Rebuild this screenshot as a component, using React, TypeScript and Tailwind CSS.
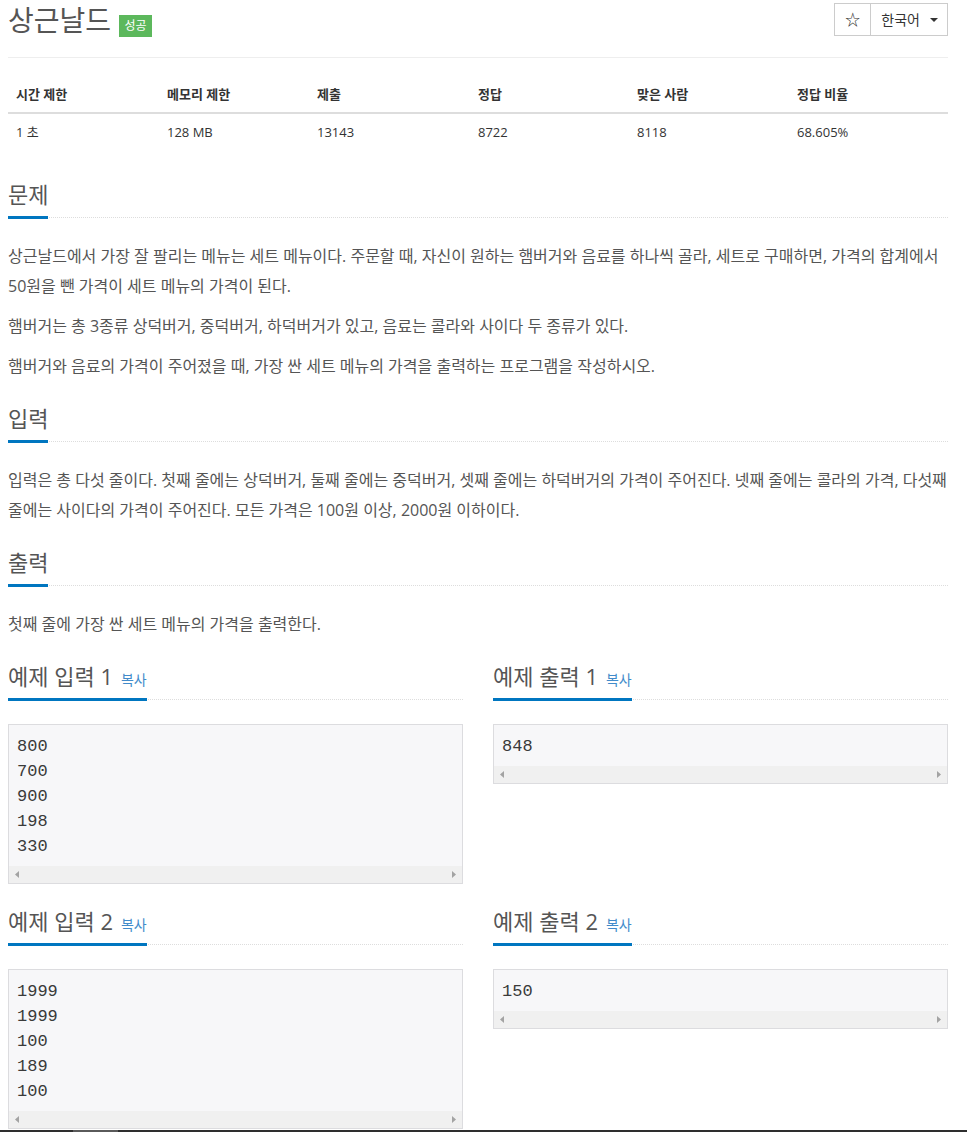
import React from 'react';

const FONT = { fontFamily: '"Open Sans", "Noto Sans CJK KR", sans-serif' };

interface HeadlineProps {
  title: string;
  copy?: boolean;
}

const Headline: React.FC<HeadlineProps> = ({ title, copy }) => (
  <div className={`${copy ? 'mb-[24px]' : 'mb-[23px]'} flex border-b border-dotted border-[#dddddd]`}>
    <h2 className="-mb-[2px] border-b-[3px] border-[#0076c0] pb-[8px] text-[22px] font-normal leading-[28px] text-[#555555]">
      {title}
      {copy && <span className="ml-[8px] text-[14px] leading-none text-[#428bca]">복사</span>}
    </h2>
  </div>
);

const ScrollBar = () => (
  <div className="flex h-[17px] items-center justify-between bg-[#f0f0f0] px-[6px]">
    <svg width="4" height="7" viewBox="0 0 4 7">
      <path d="M4 0 L0 3.5 L4 7 Z" fill="#a3a3a3" />
    </svg>
    <svg width="4" height="7" viewBox="0 0 4 7">
      <path d="M0 0 L4 3.5 L0 7 Z" fill="#a3a3a3" />
    </svg>
  </div>
);

const SampleBox: React.FC<{ lines: string[] }> = ({ lines }) => (
  <div className="border border-[#dcdcdf] bg-[#f7f7f9]">
    <pre
      className="px-[8px] pt-[9px] pb-[7px] text-[17px] leading-[25px] text-[#3a3a3a]"
      style={{ fontFamily: '"Liberation Mono", monospace' }}
    >
      {lines.join('\n')}
    </pre>
    <ScrollBar />
  </div>
);

const samples = [
  { title: '예제 입력 1', lines: ['800', '700', '900', '198', '330'] },
  { title: '예제 출력 1', lines: ['848'] },
  { title: '예제 입력 2', lines: ['1999', '1999', '100', '189', '100'] },
  { title: '예제 출력 2', lines: ['150'] },
];

const stats = [
  { head: '시간 제한', value: '1 초', w: 'w-[151px]' },
  { head: '메모리 제한', value: '128 MB', w: 'w-[150px]' },
  { head: '제출', value: '13143', w: 'w-[161px]' },
  { head: '정답', value: '8722', w: 'w-[159px]' },
  { head: '맞은 사람', value: '8118', w: 'w-[160px]' },
  { head: '정답 비율', value: '68.605%', w: 'w-[159px]' },
];

export default function App() {
  return (
    <div className="min-h-screen bg-white" style={FONT}>
      <div className="ml-[8px] w-[940px] pb-[6px]">
        {/* title row */}
        <div className="flex items-start justify-between pt-[3px]">
          <div className="flex items-end">
            <h1 className="text-[28px] font-normal leading-[34px] text-[#555555]">상근날드</h1>
            <span className="ml-[8px] flex h-[22px] w-[33px] items-center justify-center bg-[#5cb85c] text-[12px] text-white">
              성공
            </span>
          </div>
          <div className="flex h-[33px] border border-[#cccccc] text-[14px] text-[#333333]">
            <div className="flex w-[36px] items-center justify-center border-r border-[#cccccc] text-[15px]">☆</div>
            <div className="flex items-center gap-[10px] pl-[10px] pr-[9px]">
              <span>한국어</span>
              <svg width="8" height="4" viewBox="0 0 8 4">
                <path d="M0 0 L8 0 L4 4 Z" fill="#333333" />
              </svg>
            </div>
          </div>
        </div>

        <div className="mt-[20px] h-px bg-[#eeeeee]" />

        {/* stats table */}
        <table className="mt-[19px] mb-[17px] w-full table-fixed text-[13px] text-[#333333]">
          <thead>
            <tr className="border-b-2 border-[#dddddd]">
              {stats.map((s) => (
                <th key={s.head} className={`${s.w} px-[8px] py-[8px] text-left font-bold leading-[19px]`}>
                  {s.head}
                </th>
              ))}
            </tr>
          </thead>
          <tbody>
            <tr>
              {stats.map((s) => (
                <td key={s.head} className="px-[8px] py-[8px] leading-[20px]">
                  {s.value}
                </td>
              ))}
            </tr>
          </tbody>
        </table>

        <section className="pt-[13px]">
          <Headline title="문제" />
          <div className="text-[16px] leading-[30px] text-[#555555]">
            <p className="mb-[10px]">
              상근날드에서 가장 잘 팔리는 메뉴는 세트 메뉴이다. 주문할 때, 자신이 원하는 햄버거와 음료를 하나씩 골라, 세트로 구매하면, 가격의 합계에서 50원을 뺀 가격이 세트 메뉴의 가격이 된다.
            </p>
            <p className="mb-[10px]">햄버거는 총 3종류 상덕버거, 중덕버거, 하덕버거가 있고, 음료는 콜라와 사이다 두 종류가 있다.</p>
            <p className="mb-[10px]">햄버거와 음료의 가격이 주어졌을 때, 가장 싼 세트 메뉴의 가격을 출력하는 프로그램을 작성하시오.</p>
          </div>
        </section>

        <section className="pt-[13px]">
          <Headline title="입력" />
          <p className="mb-[10px] text-[16px] leading-[30px] text-[#555555]">
            입력은 총 다섯 줄이다. 첫째 줄에는 상덕버거, 둘째 줄에는 중덕버거, 셋째 줄에는 하덕버거의 가격이 주어진다. 넷째 줄에는 콜라의 가격, 다섯째 줄에는 사이다의 가격이 주어진다. 모든 가격은 100원 이상, 2000원 이하이다.
          </p>
        </section>

        <section className="pt-[13px]">
          <Headline title="출력" />
          <p className="mb-[10px] text-[16px] leading-[30px] text-[#555555]">첫째 줄에 가장 싼 세트 메뉴의 가격을 출력한다.</p>
        </section>

        <div className="grid grid-cols-2 items-start gap-x-[30px] gap-y-[23px] pt-[13px]">
          {samples.map((s) => (
            <section key={s.title}>
              <Headline title={s.title} copy />
              <SampleBox lines={s.lines} />
            </section>
          ))}
        </div>
      </div>
      <div className="fixed bottom-0 left-0 flex h-[2px] w-full bg-[#2e2e2e]">
        <div className="ml-[73px] w-[45px] bg-[#5a5a5a]" />
      </div>
    </div>
  );
}
